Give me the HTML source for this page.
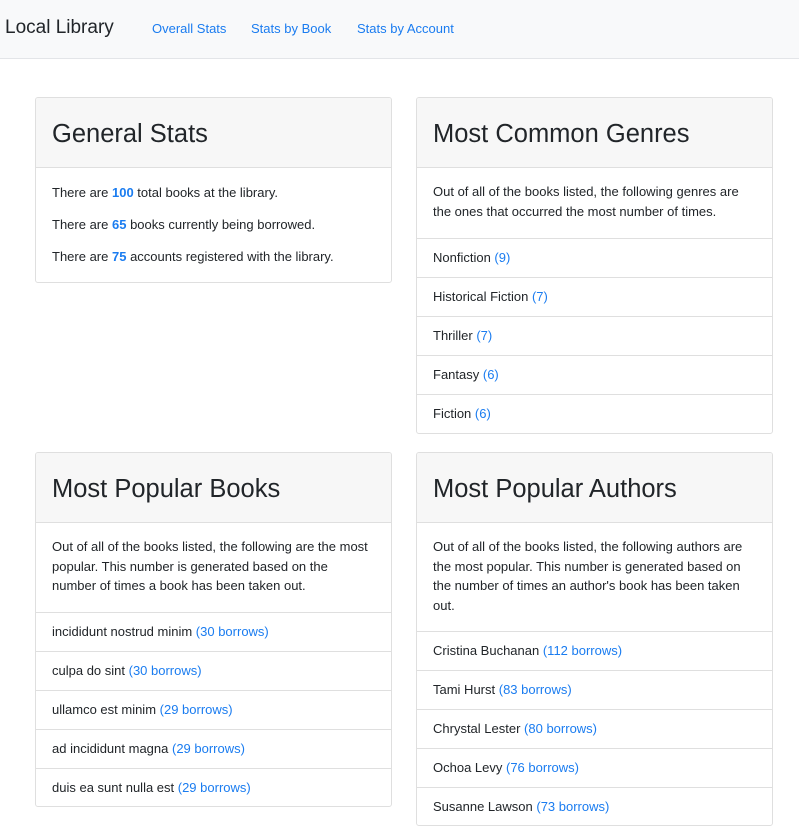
<!DOCTYPE html>
<html><head><meta charset="utf-8"><style>
*{box-sizing:border-box;margin:0;padding:0}
body{width:799px;height:831px;overflow:hidden;background:#fff;font-family:"Liberation Sans",Arial,sans-serif;color:#212529;font-size:13px}
.nav{height:59px;background:#f8f9fa;border-bottom:1px solid #e3e5e8;position:relative}
.brand{position:absolute;left:5px;top:17px;font-size:19px;color:#212529}
.nav a{position:absolute;top:21px;font-size:13px;color:#1a7cf0;text-decoration:none}
.card{position:absolute;width:357px;border:1px solid #dfdfdf;border-radius:3px;background:#fff;overflow:hidden}
.hd{height:70px;background:#f7f7f7;border-bottom:1px solid #dfdfdf;padding:20px 16px 0;font-size:25.5px;line-height:32px}
.bd{padding:15px 16px 0;line-height:19.5px}
.bd p{margin-bottom:12.5px}
.it{height:39px;border-top:1px solid #dfdfdf;padding:10px 16px 0;line-height:18px}
.b{color:#1a7cf0}
.bb{color:#1a7cf0;font-weight:bold}
</style></head><body>
<div class="nav"><span class="brand">Local Library</span><a style="left:152px">Overall Stats</a><a style="left:251px">Stats by Book</a><a style="left:357px">Stats by Account</a></div>

<div class="card" style="left:35px;top:97px;height:186px">
<div class="hd">General Stats</div>
<div class="bd" style="padding-top:15px"><p>There are <span class="bb">100</span> total books at the library.</p><p>There are <span class="bb">65</span> books currently being borrowed.</p><p>There are <span class="bb">75</span> accounts registered with the library.</p></div>
</div>

<div class="card" style="left:416px;top:97px;height:337px">
<div class="hd">Most Common Genres</div>
<div class="bd" style="height:70px;padding-top:14px">Out of all of the books listed, the following genres are the ones that occurred the most number of times.</div>
<div class="it">Nonfiction <span class="b">(9)</span></div>
<div class="it">Historical Fiction <span class="b">(7)</span></div>
<div class="it">Thriller <span class="b">(7)</span></div>
<div class="it">Fantasy <span class="b">(6)</span></div>
<div class="it">Fiction <span class="b">(6)</span></div>
</div>

<div class="card" style="left:35px;top:452px;height:355px">
<div class="hd">Most Popular Books</div>
<div class="bd" style="height:89px;padding-top:14px">Out of all of the books listed, the following are the most popular. This number is generated based on the number of times a book has been taken out.</div>
<div class="it">incididunt nostrud minim <span class="b">(30 borrows)</span></div>
<div class="it">culpa do sint <span class="b">(30 borrows)</span></div>
<div class="it">ullamco est minim <span class="b">(29 borrows)</span></div>
<div class="it">ad incididunt magna <span class="b">(29 borrows)</span></div>
<div class="it">duis ea sunt nulla est <span class="b">(29 borrows)</span></div>
</div>

<div class="card" style="left:416px;top:452px;height:374px">
<div class="hd">Most Popular Authors</div>
<div class="bd" style="height:108px;padding-top:14px">Out of all of the books listed, the following authors are the most popular. This number is generated based on the number of times an author's book has been taken out.</div>
<div class="it">Cristina Buchanan <span class="b">(112 borrows)</span></div>
<div class="it">Tami Hurst <span class="b">(83 borrows)</span></div>
<div class="it">Chrystal Lester <span class="b">(80 borrows)</span></div>
<div class="it">Ochoa Levy <span class="b">(76 borrows)</span></div>
<div class="it">Susanne Lawson <span class="b">(73 borrows)</span></div>
</div>
</body></html>
